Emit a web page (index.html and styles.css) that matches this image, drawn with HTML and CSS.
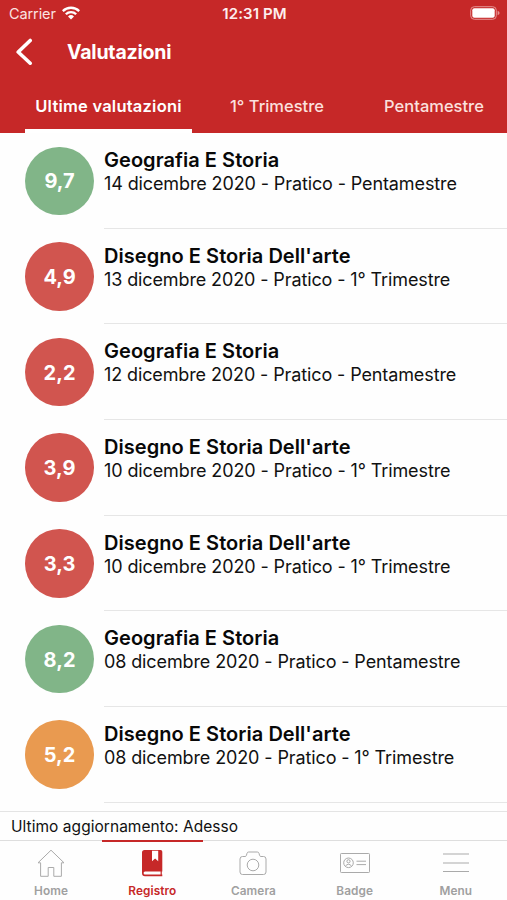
FILE: index.html
```html
<!DOCTYPE html>
<html lang="it">
<head>
<meta charset="utf-8">
<title>Valutazioni</title>
<link rel="stylesheet" href="styles.css">
</head>
<body>
<header class="header">
  <div class="status">
    <div class="carrier"><span>Carrier</span>
      <svg class="wifi" width="18" height="14" viewBox="0 0 18 14"><path d="M0 4.2A13 13 0 0 1 18 4.2L16.4 6A10.6 10.6 0 0 0 1.6 6Z"/><path d="M3 7.4A8.7 8.7 0 0 1 15 7.4L13.3 9.1A6.2 6.2 0 0 0 4.7 9.1Z"/><path d="M6 10.5A4.4 4.4 0 0 1 12 10.5L9 13.6Z"/></svg>
    </div>
    <div class="clock">12:31 PM</div>
    <svg class="battery" width="30" height="14" viewBox="0 0 30 14"><rect x=".7" y=".7" width="25.6" height="12.6" rx="3.6" fill="none" stroke="#e59292" stroke-width="1"/><rect x="2.3" y="2.3" width="22.4" height="9.4" rx="2" fill="#fff"/><path d="M27.6 4.8q2 .7 2 2.2t-2 2.2z" fill="#e59292"/></svg>
  </div>
  <div class="titlebar">
    <svg class="back" width="18" height="28" viewBox="0 0 18 28"><path d="M15.2 2.5L3.2 14L15.2 25.2"/></svg>
    <h1 class="title">Valutazioni</h1>
  </div>
  <nav class="tabs">
    <div class="tab tab-on"><span>Ultime valutazioni</span></div>
    <div class="tab tab-mid"><span>1° Trimestre</span></div>
    <div class="tab tab-end"><span>Pentamestre</span></div>
  </nav>
</header>
<main class="list">
  <article class="row"><div class="grade good">9,7</div><div class="info"><h2>Geografia E Storia</h2><p>14 dicembre 2020 - Pratico - Pentamestre</p></div></article>
  <article class="row"><div class="grade bad">4,9</div><div class="info"><h2>Disegno E Storia Dell'arte</h2><p>13 dicembre 2020 - Pratico - 1° Trimestre</p></div></article>
  <article class="row"><div class="grade bad">2,2</div><div class="info"><h2>Geografia E Storia</h2><p>12 dicembre 2020 - Pratico - Pentamestre</p></div></article>
  <article class="row"><div class="grade bad">3,9</div><div class="info"><h2>Disegno E Storia Dell'arte</h2><p>10 dicembre 2020 - Pratico - 1° Trimestre</p></div></article>
  <article class="row"><div class="grade bad">3,3</div><div class="info"><h2>Disegno E Storia Dell'arte</h2><p>10 dicembre 2020 - Pratico - 1° Trimestre</p></div></article>
  <article class="row"><div class="grade good">8,2</div><div class="info"><h2>Geografia E Storia</h2><p>08 dicembre 2020 - Pratico - Pentamestre</p></div></article>
  <article class="row"><div class="grade fair">5,2</div><div class="info"><h2>Disegno E Storia Dell'arte</h2><p>08 dicembre 2020 - Pratico - 1° Trimestre</p></div></article>
</main>
<div class="updated">Ultimo aggiornamento: Adesso</div>
<footer class="nav">
  <div class="item"><svg width="36" height="32" viewBox="0 0 36 32"><path d="M7.6 16.8H5L18 4.2L31 16.8H28.4V30.3H20.8V21.5H15.2V30.3H7.6Z"/></svg><span>Home</span></div>
  <div class="item active"><svg width="36" height="32" viewBox="0 0 36 32"><path class="solid" d="M10.5 4H26.5Q28.3 4 28.3 5.8V25.6H11Q9.6 25.6 9.6 27.1T11 28.6H28.3V30.2H11Q8 30.2 8 27V6.5Q8 4 10.5 4Z"/><path class="solid" d="M26.6 25H27.8V29H26.6Z"/><path class="mark" d="M18 4.8H24.2V15.3L21.1 12.6L18 15.3Z"/></svg><span>Registro</span></div>
  <div class="item"><svg width="36" height="32" viewBox="0 0 36 32"><path d="M7.5 10.5H10Q11 10.5 11.4 9.5L12 7.3Q12.4 6 13.7 6H22.3Q23.6 6 24 7.3L24.6 9.5Q25 10.5 26 10.5H28.5Q31 10.5 31 13V26Q31 28.5 28.5 28.5H7.5Q5 28.5 5 26V13Q5 10.5 7.5 10.5Z"/><circle cx="18" cy="19" r="5.8"/></svg><span>Camera</span></div>
  <div class="item"><svg width="36" height="32" viewBox="0 0 36 32"><rect x="3.5" y="7.5" width="29" height="19" rx=".8"/><circle cx="11.5" cy="16.8" r="4.8"/><circle cx="11.5" cy="15.3" r="1.6"/><path d="M8.5 20Q11.5 16.5 14.5 20M19.5 15.2H29M19.5 18.6H29"/></svg><span>Badge</span></div>
  <div class="item"><svg width="36" height="32" viewBox="0 0 36 32"><path d="M5 8H31M5 17H31M5 25.5H31"/></svg><span>Menu</span></div>
</footer>
</body>
</html>
```

FILE: styles.css
```css
* { box-sizing: border-box; }
body { margin: 0; width: 507px; height: 900px; overflow: hidden; display: flex; flex-direction: column; background: #fefefe; color: #111; font-family: Inter, "Liberation Sans", sans-serif; }
h1, h2, p { margin: 0; font-weight: 400; }
.header { height: 133px; flex: none; background: #c62828; color: #fff; display: flex; flex-direction: column; }
.status { height: 26px; display: grid; grid-template-columns: 1fr auto 1fr; align-items: center; padding: 0 7px 0 9px; }
.carrier { display: flex; align-items: center; gap: 6px; font-size: 14.5px; color: #fbe3e1; letter-spacing: -.1px; }
.wifi { fill: #fff; }
.clock { font-size: 15px; font-weight: 600; letter-spacing: .1px; color: #fdeeee; }
.battery { justify-self: end; }
.titlebar { height: 52px; display: flex; align-items: center; padding-left: 15px; gap: 34px; }
.back { fill: none; stroke: #fff; stroke-width: 3.6; stroke-linecap: round; stroke-linejoin: round; }
.title { font-size: 19.5px; font-weight: 700; line-height: 24px; letter-spacing: -.2px; }
.tabs { flex: 1; display: flex; padding-left: 25px; }
.tab { padding-top: 18px; font-size: 16.5px; line-height: 20px; font-weight: 500; color: #fbe0de; text-align: center; white-space: nowrap; }
.tab-on { width: 167px; font-weight: 600; color: #fff; border-bottom: 4px solid #fff; letter-spacing: .22px; }
.tab-mid { width: 170px; }
.tab-end { width: 144px; }
.list { height: 677.6px; flex: none; overflow: hidden; }
.row { height: 95.67px; display: flex; padding-left: 25.3px; gap: 10.2px; }
.grade { width: 68.5px; height: 68.5px; flex: none; margin-top: 13.5px; padding-top: 1px; border-radius: 50%; color: #fff; font-size: 20px; font-weight: 700; display: flex; align-items: center; justify-content: center; }
.good { background: #81b588; }
.bad { background: #d1554f; }
.fair { background: #e99a50; }
.info { flex: 1; border-bottom: 1.5px solid #e6e6e6; padding-top: 15px; white-space: nowrap; }
.info h2 { font-size: 20px; line-height: 24px; font-weight: 600; color: #080808; letter-spacing: .05px; }
.info p { font-size: 18px; line-height: 23px; letter-spacing: -.115px; }
.updated { height: 29.4px; flex: none; border-top: 1.5px solid #e4e4e4; padding-left: 11px; font-size: 15.5px; line-height: 29px; letter-spacing: .04px; }
.nav { height: 60px; display: grid; grid-template-columns: repeat(5, 101.2px); padding-left: .5px; border-top: 1px solid #dedede; }
.item { display: flex; flex-direction: column; align-items: center; padding-top: 5px; font-size: 11.8px; line-height: 14px; font-weight: 600; color: #a0a0a0; letter-spacing: .1px; }
.item svg { fill: none; stroke: #aaa; stroke-width: 1; }
.item span { margin-top: 6px; }
.active { color: #c62828; border-top: 2px solid #c62828; margin-top: -1px; padding-top: 4px; }
.item .solid { fill: #c62828; stroke: none; }
.item .mark { fill: #fff; stroke: none; }
```
